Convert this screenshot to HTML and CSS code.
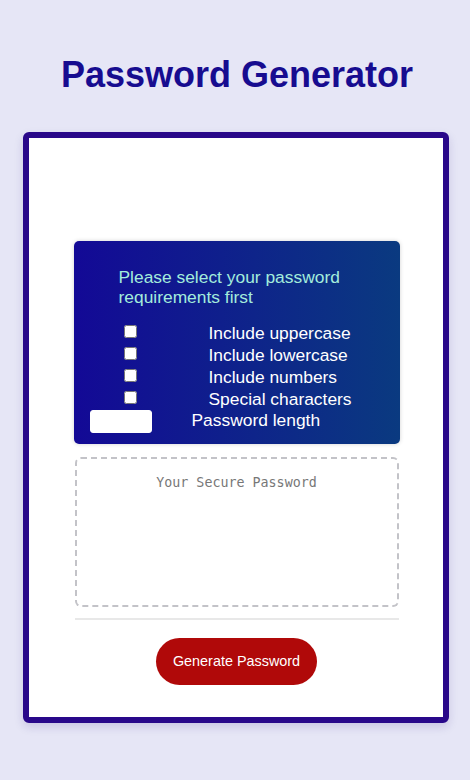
FILE: index.html
```html
<!DOCTYPE html>
<html lang="en">
<head>
<meta charset="utf-8">
<title>Password Generator</title>
<link rel="stylesheet" href="styles.css">
</head>
<body>
  <h1 class="title">Password Generator</h1>
  <div class="card">
    <div class="options">
      <p class="options-heading">Please select your password requirements first</p>
      <div class="opt-row">
        <input type="checkbox" class="opt-check" id="upper">
        <label class="opt-label" for="upper">Include uppercase</label>
      </div>
      <div class="opt-row">
        <input type="checkbox" class="opt-check" id="lower">
        <label class="opt-label" for="lower">Include lowercase</label>
      </div>
      <div class="opt-row">
        <input type="checkbox" class="opt-check" id="nums">
        <label class="opt-label" for="nums">Include numbers</label>
      </div>
      <div class="opt-row">
        <input type="checkbox" class="opt-check" id="special">
        <label class="opt-label" for="special">Special characters</label>
      </div>
      <div class="len-row">
        <input type="number" class="len-input" id="length">
        <label class="len-label" for="length">Password length</label>
      </div>
    </div>
    <textarea class="output" readonly placeholder="Your Secure Password"></textarea>
    <div class="card-footer">
      <button class="generate">Generate Password</button>
    </div>
  </div>
</body>
</html>
```
FILE: styles.css
```css
html, body {
  margin: 0;
  padding: 0;
}
body {
  background: #e6e6f6;
  font-family: "Liberation Sans", Arial, sans-serif;
  min-height: 780px;
}
.title {
  margin: 53.5px 0 36px;
  padding-left: 4px;
  text-align: center;
  font-size: 36px;
  font-weight: bold;
  color: #170c90;
  line-height: normal;
}
.card {
  margin: 0 21px 0 23px;
  border: 6px solid #29088a;
  border-radius: 6px;
  background: #ffffff;
  box-shadow: 0 4px 10px rgba(40, 20, 120, 0.15);
  padding: 103px 44px 32px 45px;
  display: flex;
  flex-direction: column;
  align-items: center;
}
.options {
  width: 326px;
  box-sizing: border-box;
  background: linear-gradient(90deg, #130996 0%, #0a3a80 100%);
  border-radius: 5px;
  box-shadow: 0 0 4px rgba(0, 0, 0, 0.18);
  padding: 26px 0 11px;
}
.options-heading {
  margin: 0 0 15px;
  padding-left: 45px;
  font-size: 17.4px;
  line-height: 20px;
  color: #a3ecdc;
}
.opt-row {
  display: flex;
  align-items: flex-start;
  height: 22px;
  padding-left: 50px;
}
.opt-check {
  width: 13px;
  height: 13px;
  margin: 3px 0 0 0;
}
.opt-label {
  margin-left: 72px;
  font-size: 17.4px;
  line-height: 22px;
  color: #ffffff;
}
.len-row {
  display: flex;
  align-items: flex-start;
  padding-left: 16px;
}
.len-input {
  width: 62px;
  height: 23px;
  box-sizing: border-box;
  margin: 0;
  border: 1px solid #ffffff;
  border-radius: 3px;
  background: #ffffff;
}
.len-label {
  margin-left: 40px;
  font-size: 17.4px;
  line-height: 20px;
  color: #ffffff;
}
.output {
  display: block;
  width: 324px;
  height: 150px;
  box-sizing: border-box;
  margin: 13px 0 0;
  padding: 16px 10px;
  border: 2px dashed #c3c3c8;
  border-radius: 6px;
  resize: none;
  font-family: "DejaVu Sans Mono", monospace;
  font-size: 13.333px;
  text-align: center;
  color: #333;
  background: #ffffff;
}
.output::placeholder {
  color: #777777;
}
.card-footer {
  width: 324px;
  margin-top: 11px;
  border-top: 2px solid #e8e8e8;
  padding-top: 18px;
  display: flex;
  justify-content: center;
}
.generate {
  height: 47px;
  padding: 0 17px;
  border: none;
  border-radius: 24px;
  background: #b00909;
  color: #ffffff;
  font-family: "Liberation Sans", Arial, sans-serif;
  font-size: 14.4px;
  cursor: pointer;
}
```
